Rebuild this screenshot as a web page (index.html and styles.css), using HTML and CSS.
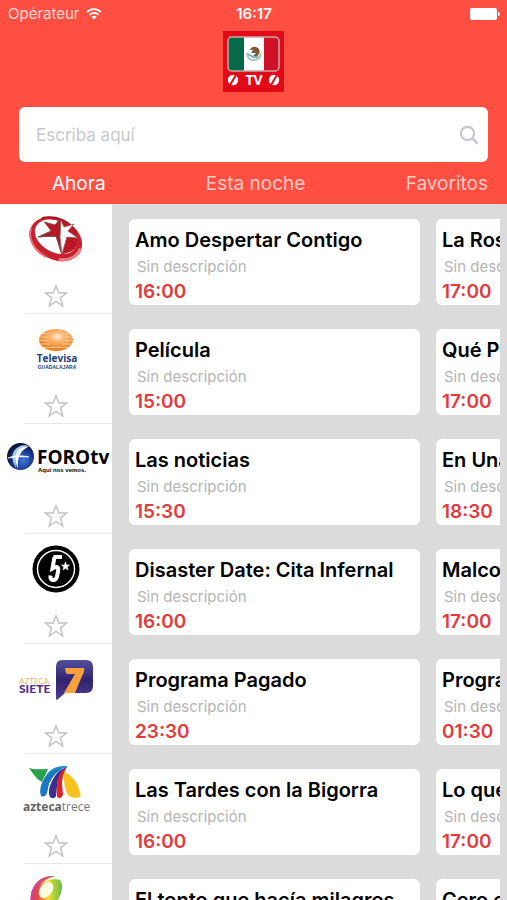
FILE: index.html
```html
<!DOCTYPE html>
<html lang="es">
<head>
  <meta charset="UTF-8" />
  <meta name="viewport" content="width=device-width, initial-scale=1.0"/>
  <title>Guía TV México</title>
  <link rel="stylesheet" href="styles.css">
</head>
<body>
  <svg class="sprite" aria-hidden="true">
    <symbol id="star" viewBox="0 0 24 24">
      <path d="M12 1.8L14.8 9H22.6L16.5 13.9L18.7 22L12 17.3L5.3 22L7.5 13.9L1.4 9H9.2Z" fill="none" stroke="#c4c4c4" stroke-width="1.5" stroke-linejoin="miter"/>
    </symbol>
  </svg>

  <header class="header">
    <div class="status-bar">
      <div class="carrier">
        <span>Opérateur</span>
        <svg width="16" height="12" viewBox="0 0 16 12" fill="none" stroke="#fff" stroke-width="1.7">
          <path d="M1 4.2C5 .2 11 .2 15 4.2"/>
          <path d="M3.5 6.8C6.1 4.2 9.9 4.2 12.5 6.8"/>
          <path d="M5.4 8.8C7 7.3 9 7.3 10.6 8.8L8 11.5Z" fill="#fff" stroke="none"/>
        </svg>
      </div>
      <span class="clock">16:17</span>
      <svg class="battery" width="30" height="12" viewBox="0 0 30 12" fill="#fff">
        <rect x="0" y="0" width="27" height="12" rx="2"/>
        <path d="M28 4C30.4 4.6 30.4 7.4 28 8Z"/>
      </svg>
    </div>

    <svg class="app-logo" width="61" height="61" viewBox="0 0 61 61" role="img" aria-label="TV México">
      <rect width="61" height="61" fill="#e30a17"/>
      <rect x="5" y="6" width="51" height="34" rx="4" fill="#fff"/>
      <path d="M9 6H21V40H9Q5 40 5 36V10Q5 6 9 6Z" fill="#046a48"/>
      <path d="M41 6H52Q56 6 56 10V36Q56 40 52 40H41Z" fill="#ce1128"/>
      <rect x="5" y="6" width="51" height="34" rx="4" fill="none" stroke="#c5aaa8" stroke-width="1.5"/>
      <path d="M24 22Q25 30 31 29Q37 29 38 22" fill="none" stroke="#a9c9b4" stroke-width="2"/>
      <path d="M27 19Q29 15 33 16Q38 18 36 23Q34 27 30 25L33 22L28 22L30 19Z" fill="#7d5b36"/>
      <path d="M25 23L30 26L35 26" fill="none" stroke="#72b5b8" stroke-width="2"/>
      <circle cx="10" cy="49" r="5.2" fill="#fff"/>
      <circle cx="51" cy="49" r="5.2" fill="#fff"/>
      <path d="M7 54L13 44M48 54L54 44" stroke="#e30a17" stroke-width="2"/>
      <text x="31" y="54" class="app-logo-text">TV</text>
    </svg>

    <form class="search">
      <input type="search" placeholder="Escriba aquí" aria-label="Escriba aquí">
      <button type="submit" aria-label="Buscar">
        <svg width="20" height="20" viewBox="0 0 20 20" fill="none" stroke="#c8c8cc" stroke-width="2.2">
          <circle cx="8.5" cy="8.5" r="6.6"/>
          <path d="M13 13L18.5 18.5" stroke-width="2.8"/>
        </svg>
      </button>
    </form>

    <nav class="tabs">
      <a href="#ahora" class="active">Ahora</a>
      <a href="#noche">Esta noche</a>
      <a href="#favoritos">Favoritos</a>
    </nav>
  </header>

  <main class="guide">
    <section class="row">
      <div class="channel">
        <svg class="logo" viewBox="0 0 112 70" role="img" aria-label="Canal de las Estrellas">
          <g transform="rotate(28 56 34)">
            <ellipse cx="56" cy="34" rx="27.5" ry="20.5" fill="#c8202c"/>
            <path d="M29 36A27 20 0 0 0 56 54.5" fill="none" stroke="#e9707a" stroke-width="2"/>
            <path d="M82 31A27 20 0 0 1 68 51" fill="none" stroke="#ee8088" stroke-width="3"/>
            <path d="M34 22A27 20 0 0 1 60 14.5" fill="none" stroke="#a50f20" stroke-width="2"/>
            <ellipse cx="55" cy="32" rx="22.5" ry="15.5" fill="#fff"/>
          </g>
          <path d="M60 14Q73 17 78 31Q79 42 72 46Q66 49 62 49Z" fill="#bc1724"/>
          <path d="M44 17L55 20L60 14L61 49L56 32L38 32L51 26Z" fill="#b91623"/>
          <path d="M44 17L55 20L60 14M51 26L38 32L56 31L62 49" fill="none" stroke="#68595a" stroke-width="1"/>
          <path d="M61 15L64 22L74 19L68 26L78 33L67 32L62 49L60 32Z" fill="#fff" stroke="#8b5754" stroke-width=".8"/>
        </svg>
        <button type="button" class="fav" aria-label="Añadir a favoritos"><svg><use href="#star"/></svg></button>
      </div>
      <div class="programs">
        <article class="card"><h2>Amo Despertar Contigo</h2><p>Sin descripción</p><time>16:00</time></article>
        <article class="card"><h2>La Rosa de Guadalupe</h2><p>Sin descripción</p><time>17:00</time></article>
      </div>
    </section>

    <section class="row">
      <div class="channel">
        <svg class="logo" viewBox="0 0 112 70" role="img" aria-label="Televisa Guadalajara">
          <defs>
            <radialGradient id="sun" cx=".55" cy=".35" r=".6">
              <stop offset="0" stop-color="#fff3e2"/>
              <stop offset=".3" stop-color="#fbbd7c"/>
              <stop offset="1" stop-color="#ef7f1c"/>
            </radialGradient>
          </defs>
          <ellipse cx="56" cy="25" rx="17" ry="11" fill="url(#sun)"/>
          <path d="M41 18.5H50M63 18.5H71M39 22H48M65 22H73M39 25.5H48M65 25.5H73M40 29H50M63 29H72M43 32.5H69" stroke="#fff" stroke-width=".8" opacity=".6"/>
          <text x="57" y="47" class="televisa-name">Televisa</text>
          <text x="57" y="54" class="televisa-city">GUADALAJARA</text>
        </svg>
        <button type="button" class="fav" aria-label="Añadir a favoritos"><svg><use href="#star"/></svg></button>
      </div>
      <div class="programs">
        <article class="card"><h2>Película</h2><p>Sin descripción</p><time>15:00</time></article>
        <article class="card"><h2>Qué Pobres Tan Ricos</h2><p>Sin descripción</p><time>17:00</time></article>
      </div>
    </section>

    <section class="row">
      <div class="channel">
        <svg class="logo" viewBox="0 0 112 70" role="img" aria-label="Foro TV">
          <defs>
            <radialGradient id="globe" cx=".6" cy=".65" r=".6">
              <stop offset="0" stop-color="#3f78d8"/>
              <stop offset=".55" stop-color="#1c3f9c"/>
              <stop offset="1" stop-color="#0b1638"/>
            </radialGradient>
          </defs>
          <circle cx="20.5" cy="31.5" r="13.5" fill="url(#globe)"/>
          <path d="M16 43Q14 24 29 21Q20 18 14 26Q10 33 16 43Z" fill="#a9cbed"/>
          <path d="M18 44Q16 27 29 21.5Q18 21 16 30Q15 38 18 44Z" fill="#fff"/>
          <path d="M8 33Q16 29 29 32Q18 31 8 33Z" fill="#fff" stroke="#fff" stroke-width=".7"/>
          <text x="37" y="39" class="foro-name">FOROtv</text>
          <text x="38" y="47" class="foro-slogan">Aquí nos vemos.</text>
        </svg>
        <button type="button" class="fav" aria-label="Añadir a favoritos"><svg><use href="#star"/></svg></button>
      </div>
      <div class="programs">
        <article class="card"><h2>Las noticias</h2><p>Sin descripción</p><time>15:30</time></article>
        <article class="card"><h2>En Una Hora</h2><p>Sin descripción</p><time>18:30</time></article>
      </div>
    </section>

    <section class="row">
      <div class="channel">
        <svg class="logo" viewBox="0 0 112 70" role="img" aria-label="Canal 5">
          <circle cx="56" cy="34" r="23.5" fill="#000"/>
          <circle cx="56" cy="34" r="18.5" fill="none" stroke="#fff" stroke-width="1.5"/>
          <path d="M53.5 22H62M54.5 22L52.5 33.5Q59.5 29.500 58 36.5L57 41.5Q56 45.5 52.5 45Q50 44.5 50.5 40.5" fill="none" stroke="#fff" stroke-width="4"/>
          <path d="M65.5 27L66.5 30L69.5 30L67.2 32L68 35L65.5 33.2L63 35L63.8 32L61.5 30L64.5 30Z" fill="#fff" stroke="#fff" stroke-width=".6"/>
        </svg>
        <button type="button" class="fav" aria-label="Añadir a favoritos"><svg><use href="#star"/></svg></button>
      </div>
      <div class="programs">
        <article class="card"><h2>Disaster Date: Cita Infernal</h2><p>Sin descripción</p><time>16:00</time></article>
        <article class="card"><h2>Malcolm</h2><p>Sin descripción</p><time>17:00</time></article>
      </div>
    </section>

    <section class="row">
      <div class="channel">
        <svg class="logo" viewBox="0 0 112 70" role="img" aria-label="Azteca Siete">
          <defs>
            <linearGradient id="bubble" x1="0" y1="0" x2="0" y2="1">
              <stop offset="0" stop-color="#54509c"/>
              <stop offset=".5" stop-color="#30236e"/>
              <stop offset="1" stop-color="#4b3a91"/>
            </linearGradient>
          </defs>
          <text x="19" y="39" class="siete-top">AZTECA</text>
          <text x="19" y="48" class="siete-name">SIETE</text>
          <path d="M62 15H86Q93 15 93 22V41Q93 48 86 48H65L57 55Q56 55 56 53V22Q56 15 62 15Z" fill="url(#bubble)"/>
          <path d="M65 23H84Q85 26 82 31L75 48H64L75 29H67Q65 27 65 23Z" fill="#f9a13c"/>
        </svg>
        <button type="button" class="fav" aria-label="Añadir a favoritos"><svg><use href="#star"/></svg></button>
      </div>
      <div class="programs">
        <article class="card"><h2>Programa Pagado</h2><p>Sin descripción</p><time>23:30</time></article>
        <article class="card"><h2>Programa Pagado</h2><p>Sin descripción</p><time>01:30</time></article>
      </div>
    </section>

    <section class="row">
      <div class="channel">
        <svg class="logo" viewBox="0 0 112 70" role="img" aria-label="Azteca Trece">
          <path d="M29 13Q34 15 48 14L42 27Q37 25 29 13Z" fill="#27a04b"/>
          <path d="M41 41Q38 33 45 22Q53 12 67 11Q54 17 49 29L47 38Q45 43 41 41Z" fill="#1b78c0"/>
          <path d="M50 42Q47 36 52 26Q57 15 67 12Q58 20 57 31L56 41Q54 45 50 42Z" fill="#38308c"/>
          <path d="M57 42Q56 32 58 24Q61 15 67 12Q62 20 62 29L63 40Q61 45 57 42Z" fill="#e4202c"/>
          <path d="M64 17Q73 20 78 31L81 41Q76 45 69 41Q63 34 64 17Z" fill="#f8c21f"/>
          <path d="M47 20Q54 11 67 12" fill="none" stroke="#2688cb" stroke-width="1.6"/>
          <text x="23" y="56" class="trece-name"><tspan class="trece-bold">azteca</tspan>trece</text>
        </svg>
        <button type="button" class="fav" aria-label="Añadir a favoritos"><svg><use href="#star"/></svg></button>
      </div>
      <div class="programs">
        <article class="card"><h2>Las Tardes con la Bigorra</h2><p>Sin descripción</p><time>16:00</time></article>
        <article class="card"><h2>Lo que callamos las mujeres</h2><p>Sin descripción</p><time>17:00</time></article>
      </div>
    </section>

    <section class="row">
      <div class="channel">
        <svg class="logo" viewBox="0 0 112 70" role="img" aria-label="Galavisión">
          <defs>
            <linearGradient id="swirl" x1="0" y1="0" x2="1" y2="0">
              <stop offset="0" stop-color="#cf3c90"/>
              <stop offset=".25" stop-color="#e8483c"/>
              <stop offset=".55" stop-color="#f4e02c"/>
              <stop offset="1" stop-color="#5fbe46"/>
            </linearGradient>
          </defs>
          <path d="M55 11Q36 10 31 29Q28 42 37 47Q50 50 58 35Q65 21 60 15Q52 12 44 18Q38 22 37 30Q40 16 55 11Z" fill="url(#swirl)"/>
          <path d="M55 11Q37 10 31 28L32 37Q34 16 55 11Z" fill="#d4458e"/>
          <ellipse cx="46" cy="25" rx="6" ry="9" transform="rotate(38 46 25)" fill="#fffbe2"/>
        </svg>
        <button type="button" class="fav" aria-label="Añadir a favoritos"><svg><use href="#star"/></svg></button>
      </div>
      <div class="programs">
        <article class="card"><h2>El tonto que hacía milagros</h2><p>Sin descripción</p></article>
        <article class="card"><h2>Cero en conducta</h2><p>Sin descripción</p></article>
      </div>
    </section>
  </main>
</body>
</html>
```
FILE: styles.css
```css
* {
  box-sizing: border-box;
}
body {
  font-family: Inter, "Liberation Sans", sans-serif;
  background-color: #fff;
  margin: 0;
  height: 100vh;
  display: flex;
  flex-direction: column;
  overflow: hidden;
}
.sprite {
  display: none;
}

/* Header */
.header {
  background-color: #ff4f43;
  color: #fff;
  flex: none;
  display: flex;
  flex-direction: column;
}
.status-bar {
  display: grid;
  grid-template-columns: 1fr auto 1fr;
  align-items: center;
  height: 27px;
  padding: 0 7px 0 8px;
  font-size: 15px;
}
.carrier {
  display: flex;
  align-items: center;
  gap: 6px;
  color: #ffdcd9;
}
.clock {
  font-weight: 600;
}
.battery {
  justify-self: end;
}
.app-logo {
  align-self: center;
  margin: 4px 0 15px;
}
.app-logo-text {
  font: bold 14px "Open Sans", sans-serif;
  fill: #fff;
  text-anchor: middle;
}
.search {
  display: flex;
  align-items: center;
  height: 55px;
  margin: 0 19px;
  padding: 0 9px 0 17px;
  background-color: #fff;
  border-radius: 6px;
}
.search input {
  flex: 1;
  min-width: 0;
  padding: 0;
  border: none;
  outline: none;
  background: none;
  font-family: inherit;
  font-size: 17px;
}
.search input::placeholder {
  color: #c8c8cc;
}
.search button {
  display: flex;
  padding: 0;
  border: none;
  background: none;
  cursor: pointer;
}
.tabs {
  display: flex;
  justify-content: space-between;
  padding: 1px 19px 0 52px;
  font-size: 19px;
  line-height: 41px;
}
.tabs a {
  color: #ffc9c5;
  text-decoration: none;
}
.tabs .active {
  color: #fff;
}

/* Program guide */
.guide {
  flex: 1;
  min-height: 0;
  overflow-y: auto;
  scrollbar-width: none;
}
.row {
  display: flex;
}
.channel {
  flex: none;
  display: flex;
  flex-direction: column;
  align-items: center;
  width: 112px;
  padding-top: 1px;
  background: linear-gradient(#e8e8e8, #e8e8e8) 25px 100% / 100% 1px no-repeat;
}
.logo {
  width: 112px;
  height: 70px;
}
.fav {
  display: flex;
  margin-top: 9px;
  padding: 0;
  border: none;
  background: none;
  cursor: pointer;
}
.fav svg {
  width: 24px;
  height: 24px;
}
.programs {
  flex: 1;
  min-width: 0;
  display: flex;
  gap: 16px;
  padding: 15px 0 9px 17px;
  background-color: #dbdbdb;
  border-right: 7px solid #dbdbdb;
  overflow-x: auto;
  scrollbar-width: none;
}
.card {
  flex: none;
  width: 291px;
  min-height: 86px;
  padding: 7px 6px 1px;
  background-color: #fff;
  border-radius: 6px;
}
.card h2 {
  margin: 0;
  font-size: 20px;
  font-weight: 600;
  line-height: 28px;
  color: #000;
  white-space: nowrap;
}
.card p {
  margin: 0;
  padding-left: 2px;
  font-size: 15px;
  line-height: 26px;
  color: #b4b4b4;
}
.card time {
  display: block;
  font-size: 19px;
  font-weight: 600;
  line-height: 24px;
  color: #e53a3a;
}

/* Channel logos */
.televisa-name {
  font: bold 10px "Open Sans", sans-serif;
  fill: #1d3c74;
  text-anchor: middle;
}
.televisa-city {
  font: bold 5px "Liberation Sans", sans-serif;
  fill: #1d3c74;
  text-anchor: middle;
}
.foro-name {
  font: bold 19px "Open Sans", sans-serif;
}
.foro-slogan {
  font: bold 6px "Liberation Sans", sans-serif;
}
.siete-top {
  font: 8px Lato, sans-serif;
  fill: #eebb6b;
}
.siete-name {
  font: 900 12px Lato, sans-serif;
  fill: #55308d;
}
.trece-name {
  font: 12px "Open Sans", sans-serif;
  fill: #77787b;
}
.trece-bold {
  font-weight: bold;
  fill: #626366;
}
```
